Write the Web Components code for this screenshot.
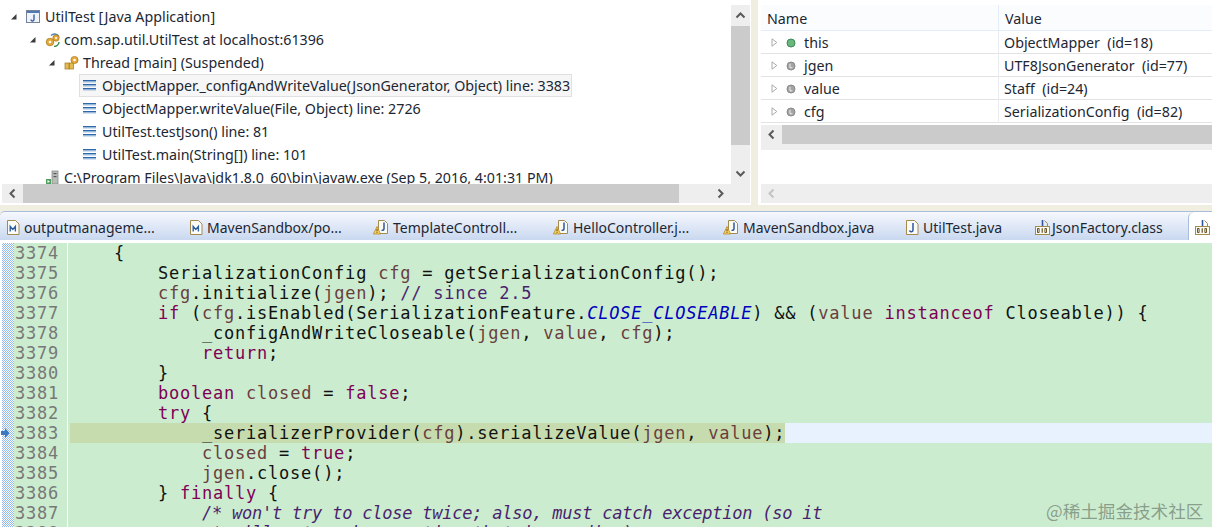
<!DOCTYPE html>
<html>
<head>
<meta charset="utf-8">
<title>UtilTest debug</title>
<style>
  html, body { margin: 0; height: 100%; overflow: hidden; }
  body { background: #f0ede1; font-family: "Noto Sans", sans-serif; }
  eclipse-window { display: block; }
</style>
</head>
<body>
<eclipse-window>
  <debug-view slot="left">
    <tree-row level="0" icon="app" twist="open">UtilTest [Java Application]</tree-row>
    <tree-row level="1" icon="vm" twist="open">com.sap.util.UtilTest at localhost:61396</tree-row>
    <tree-row level="2" icon="thread" twist="open">Thread [main] (Suspended)</tree-row>
    <tree-row level="3" icon="frame" selected>ObjectMapper._configAndWriteValue(JsonGenerator, Object) line: 3383</tree-row>
    <tree-row level="3" icon="frame">ObjectMapper.writeValue(File, Object) line: 2726</tree-row>
    <tree-row level="3" icon="frame">UtilTest.testJson() line: 81</tree-row>
    <tree-row level="3" icon="frame">UtilTest.main(String[]) line: 101</tree-row>
    <tree-row level="1" icon="proc">C:\Program Files\Java\jdk1.8.0_60\bin\javaw.exe (Sep 5, 2016, 4:01:31 PM)</tree-row>
  </debug-view>
  <variables-view slot="right">
    <var-row kind="this" name="this" value="ObjectMapper  (id=18)"></var-row>
    <var-row kind="local" name="jgen" value="UTF8JsonGenerator  (id=77)"></var-row>
    <var-row kind="local" name="value" value="Staff  (id=24)"></var-row>
    <var-row kind="local" name="cfg" value="SerializationConfig  (id=82)"></var-row>
  </variables-view>
  <editor-tabs slot="tabs">
    <editor-tab icon="maven" width="183">outputmanageme...</editor-tab>
    <editor-tab icon="maven" width="183">MavenSandbox/po...</editor-tab>
    <editor-tab icon="warn" width="180">TemplateControll...</editor-tab>
    <editor-tab icon="warn" width="170">HelloController.j...</editor-tab>
    <editor-tab icon="warn" width="183">MavenSandbox.java</editor-tab>
    <editor-tab icon="java" width="129">UtilTest.java</editor-tab>
    <editor-tab icon="cls" width="160">JsonFactory.class</editor-tab>
    <editor-tab icon="cls" active></editor-tab>
  </editor-tabs>
  <code-editor slot="editor">
    <code-line n="3374">    {</code-line>
    <code-line n="3375">        SerializationConfig <v-ar>cfg</v-ar> = getSerializationConfig();</code-line>
    <code-line n="3376">        <v-ar>cfg</v-ar>.initialize(<v-ar>jgen</v-ar>); <c-om>// since 2.5</c-om></code-line>
    <code-line n="3377">        <k-w>if</k-w> (<v-ar>cfg</v-ar>.isEnabled(SerializationFeature.<s-t>CLOSE_CLOSEABLE</s-t>) &amp;&amp; (<v-ar>value</v-ar> <k-w>instanceof</k-w> Closeable)) {</code-line>
    <code-line n="3378">            _configAndWriteCloseable(<v-ar>jgen</v-ar>, <v-ar>value</v-ar>, <v-ar>cfg</v-ar>);</code-line>
    <code-line n="3379">            <k-w>return</k-w>;</code-line>
    <code-line n="3380">        }</code-line>
    <code-line n="3381">        <k-w>boolean</k-w> <v-ar>closed</v-ar> = <k-w>false</k-w>;</code-line>
    <code-line n="3382">        <k-w>try</k-w> {</code-line>
    <code-line n="3383" current>            _serializerProvider(<v-ar>cfg</v-ar>).serializeValue(<v-ar>jgen</v-ar>, <v-ar>value</v-ar>);</code-line>
    <code-line n="3384">            <v-ar>closed</v-ar> = <k-w>true</k-w>;</code-line>
    <code-line n="3385">            <v-ar>jgen</v-ar>.close();</code-line>
    <code-line n="3386">        } <k-w>finally</k-w> {</code-line>
    <code-line n="3387">            <m-c>/* won't try to close twice; also, must catch exception (so it</m-c></code-line>
    <code-line n="3388">            <m-c> * will not mask exception that is pending)</m-c></code-line>
  </code-editor>
</eclipse-window>

<script>
  // icons: paths in a 15x15 box
  const ICONS = {
    app: `<rect x=".5" y="1.5" width="13" height="12" fill="#eef2fa" stroke="#76849b"/><rect x="1" y="2" width="12" height="2" fill="#4f78b4"/><path d="M8 5.5v5a1.5 1.5 0 0 1-3 0" fill="none" stroke="#2f55a0" stroke-width="1.3"/>`,
    vm: `<path d="M6 3.5a5 5 0 0 1 8 1" fill="none" stroke="#4d86b8" stroke-width="1.5"/><circle cx="11" cy="6" r="3.2" fill="#e4a83a" stroke="#a87818" stroke-width=".7"/><circle cx="11" cy="6" r="1.1" fill="#fff"/><circle cx="5" cy="10" r="3.8" fill="#e4a83a" stroke="#a87818" stroke-width=".7"/><circle cx="5" cy="10" r="1.3" fill="#fff"/><path d="M14 10a5 5 0 0 1-5 4.5" fill="none" stroke="#3f8c4f" stroke-width="1.5"/>`,
    thread: `<rect x="1" y="8" width="4" height="6" fill="#e4bb50" stroke="#a07820" stroke-width=".7"/><rect x="5.5" y="8" width="4" height="6" fill="#e4bb50" stroke="#a07820" stroke-width=".7"/><circle cx="10.5" cy="5" r="3.6" fill="#e8a838" stroke="#a87818" stroke-width=".7"/><circle cx="10.5" cy="5" r="1.3" fill="#fff"/>`,
    frame: `<rect x="0" y="2" width="13" height="1.4" fill="#2f68a8"/><rect x="0" y="3.4" width="13" height="1" fill="#8fb2d8"/><rect x="0" y="6" width="13" height="1.4" fill="#2f68a8"/><rect x="0" y="7.4" width="13" height="1" fill="#8fb2d8"/><rect x="0" y="10" width="13" height="1.4" fill="#2f68a8"/><rect x="0" y="11.4" width="13" height="1" fill="#8fb2d8"/>`,
    proc: `<rect x="7" y="1" width="6" height="13" fill="#b9bdb8" stroke="#7a7f7a" stroke-width=".7"/><rect x="8.5" y="3" width="3" height="1.2" fill="#556"/><rect x="8.5" y="6" width="3" height="1.2" fill="#556"/><rect x="1" y="9" width="5" height="5" fill="#4f9f5f"/><path d="M2.5 10v3l2.5-1.5z" fill="#fff"/>`,
    maven: `<path d="M.5.5h8l3.5 3.5v10.5H.5z" fill="#fbfbf6" stroke="#a58a50"/><rect x="2.5" y="5.5" width="7.5" height="7" fill="#fff"/><path d="M3.2 11.5v-5l2.6 3 2.6-3v5" fill="none" stroke="#2d5fa0" stroke-width="1.4"/>`,
    java: `<path d="M.5.5h8l3.5 3.5v10.5H.5z" fill="#fbfbf6" stroke="#a58a50"/><path d="M7 3v7a1.8 1.8 0 0 1-3.5.6" fill="none" stroke="#2f55a0" stroke-width="1.5"/>`,
    warn: `<path d="M5.5.5h6l3 3v10h-9z" fill="#fbfbf6" stroke="#a58a50"/><path d="M11 2.5v6.5a1.6 1.6 0 0 1-2.5 1" fill="none" stroke="#2f55a0" stroke-width="1.5"/><path d="M4 6.5l3.6 7.5H.4z" fill="#f5d060" stroke="#b08020" stroke-width=".7"/><path d="M4 9v2.4M4 12.2v.8" stroke="#604000" stroke-width=".9"/>`,
    cls: `<path d="M7.5 0v6a1.8 1.8 0 0 1-3.2.8" fill="none" stroke="#2f55a0" stroke-width="1.6"/><path d="M9.5 .5l3 3v3" fill="none" stroke="#a58a50"/><rect x=".5" y="6.5" width="14" height="8" fill="#fbfbf6" stroke="#a58a50"/><path d="M2.5 8.5h1.6v4H2.5zM9.9 8.5h1.6v4H9.9z" fill="none" stroke="#5a4210" stroke-width=".9"/><path d="M7.2 8.2v4.6" stroke="#5a4210" stroke-width="1.1"/>`
  }

  class EclipseWindow extends HTMLElement {
    constructor() {
      super()
      this.attachShadow({ mode: 'open' })
      this.shadowRoot.innerHTML = `
        <style>
          :host { display: block; width: 1212px; height: 527px; background: #f0ede1; overflow: hidden; position: relative; }
          .top { display: grid; grid-template-columns: 751px 1fr; column-gap: 7px; height: 205px; }
          .gap { height: 6px; }
        </style>
        <div class="top">
          <slot name="left"></slot>
          <slot name="right"></slot>
        </div>
        <div class="gap"></div>
        <slot name="tabs"></slot>
        <slot name="editor"></slot>
        <j-watermark></j-watermark>
      `
    }
  }

  class ScrollBar extends HTMLElement {
    constructor() {
      super()
      this.attachShadow({ mode: 'open' })
      this.shadowRoot.innerHTML = `
        <style>
          :host { display: flex; background: #eeeeee; flex: none; }
          :host([dir-v="v"]) { flex-direction: column; width: 19px; height: 179px; }
          :host(:not([dir-v="v"])) { height: 19px; }
          .btn { flex: none; display: flex; align-items: center; justify-content: center; width: 21px; height: 19px; }
          :host([dir-v="v"]) .btn { width: 19px; height: 21px; }
          .thumb { background: #cbcbcb; flex: none; }
          .rest { flex: 1; }
          svg { display: block; }
        </style>
        <div class="btn" id="a"></div><div class="thumb"></div><div class="rest"></div><div class="btn" id="b"></div>
      `
    }
    connectedCallback() {
      const v = this.getAttribute('dir-v') === 'v'
      const len = this.getAttribute('thumb') || 0
      const color = this.hasAttribute('disabled') ? '#c4c4c4' : '#5a5a5a'
      const thumb = this.shadowRoot.querySelector('.thumb')
      if (v) thumb.style.height = len + 'px'
      else thumb.style.width = len + 'px'
      const arrow = (d) => `<svg width="11" height="11" viewBox="0 0 11 11"><path d="${d}" fill="none" stroke="${color}" stroke-width="2"/></svg>`
      this.shadowRoot.querySelector('#a').innerHTML = arrow(v ? 'M1.5 7.5l4-4 4 4' : 'M7.5 1.5l-4 4 4 4')
      this.shadowRoot.querySelector('#b').innerHTML = this.hasAttribute('no-end') ? '' : arrow(v ? 'M1.5 3.5l4 4 4-4' : 'M3.5 1.5l4 4-4 4')
    }
  }

  class DebugView extends HTMLElement {
    constructor() {
      super()
      this.attachShadow({ mode: 'open' })
      this.shadowRoot.innerHTML = `
        <style>
          :host { display: grid; grid-template-columns: 1fr 19px; grid-template-rows: 179px 19px 2px; padding: 5px 1px 0 0; background: #fff; }
          .tree { overflow: hidden; background: #fff; }
          .h { margin-left: 2px; }
          .corner { background: #eee; }
        </style>
        <div class="tree"><slot></slot></div>
        <scroll-bar dir-v="v" thumb="119"></scroll-bar>
        <scroll-bar class="h" thumb="656"></scroll-bar>
        <div class="corner"></div>
      `
    }
  }

  class TreeRow extends HTMLElement {
    constructor() {
      super()
      this.attachShadow({ mode: 'open' })
      this.shadowRoot.innerHTML = `
        <style>
          :host { display: flex; align-items: center; height: 23px; font-size: 14.26px; color: #1c2733; white-space: nowrap; }
          .tw { width: 12px; flex: none; }
          .tw svg { display: block; }
          .ic { width: 15px; height: 15px; flex: none; margin-right: 4px; }
          .sel { display: flex; align-items: center; height: 23px; box-sizing: border-box; padding: 0 2px 0 4px; }
          :host([selected]) .sel { background: #f6f6f6; outline: 1px solid #e0e0e0; outline-offset: -1px; }
        </style>
        <div class="tw"></div>
        <div class="sel"><svg class="ic" viewBox="0 0 15 15"></svg><span><slot></slot></span></div>
      `
    }
    connectedCallback() {
      this.style.paddingLeft = [10, 29, 48, 67][+this.getAttribute('level')] + 'px'
      this.shadowRoot.querySelector('.ic').innerHTML = ICONS[this.getAttribute('icon')]
      if (this.getAttribute('twist') === 'open') {
        this.shadowRoot.querySelector('.tw').innerHTML = '<svg width="7" height="7" viewBox="0 0 7 7"><path d="M6.5 1v5.5H1z" fill="#3c3c3c"/></svg>'
      }
    }
  }

  class VariablesView extends HTMLElement {
    constructor() {
      super()
      this.attachShadow({ mode: 'open' })
      this.shadowRoot.innerHTML = `
        <style>
          :host { display: block; padding: 5px 0 0 3px; background: #fff; height: 200px; font-size: 14.26px; color: #1c2733; }
          .head { display: grid; grid-template-columns: 237px 1fr; height: 25px; background: #fbfcfe; border-bottom: 1px solid #e3edfb; }
          .head div { padding-left: 6px; line-height: 27px; }
          .head div + div { border-left: 1px solid #e3edfb; }
          .rows { height: 94px; overflow: hidden; }
          .pane-h { height: 25px; background: #eee; }
          .space { height: 34px; }
        </style>
        <div class="head"><div>Name</div><div>Value</div></div>
        <div class="rows"><slot></slot></div>
        <div class="pane-h"><scroll-bar thumb="430" no-end></scroll-bar></div>
        <div class="space"></div>
        <scroll-bar disabled no-end></scroll-bar>
      `
    }
  }

  class VarRow extends HTMLElement {
    constructor() {
      super()
      this.attachShadow({ mode: 'open' })
      this.shadowRoot.innerHTML = `
        <style>
          :host { display: grid; grid-template-columns: 237px 1fr; height: 22px; border-bottom: 1px solid #e3e3e3; line-height: 23px; white-space: pre; }
          .n { display: flex; align-items: center; padding-left: 10px; }
          .v { border-left: 1px solid #e9edf2; padding-left: 5px; }
          .tw { margin-right: 8px; display: block; }
          .dot { margin-right: 8px; display: block; }
        </style>
        <div class="n">
          <svg class="tw" width="7" height="9" viewBox="0 0 7 9"><path d="M1 .8v7.4L5.8 4.5z" fill="#fff" stroke="#a9a9a9"/></svg>
          <svg class="dot" width="10" height="10" viewBox="0 0 10 10"></svg>
          <span id="n"></span>
        </div>
        <div class="v" id="v"></div>
      `
    }
    connectedCallback() {
      this.shadowRoot.querySelector('#n').textContent = this.getAttribute('name')
      this.shadowRoot.querySelector('#v').textContent = this.getAttribute('value')
      this.shadowRoot.querySelector('.dot').innerHTML = this.getAttribute('kind') === 'this'
        ? '<circle cx="5" cy="5" r="4" fill="#6bb67d" stroke="#3a8a55"/>'
        : '<circle cx="5" cy="5" r="4" fill="#a3a3a3" stroke="#8a8a8a"/><path d="M4 2.8v4h2.4" fill="none" stroke="#eee" stroke-width="1"/>'
    }
  }

  class EditorTabs extends HTMLElement {
    constructor() {
      super()
      this.attachShadow({ mode: 'open' })
      this.shadowRoot.innerHTML = `
        <style>
          :host { display: flex; height: 32px; box-sizing: border-box; border-top: 1px solid #a9bcd9; background: linear-gradient(#f6f8fd, #c9d8f0) 0 0 / 100% 28px no-repeat, #fff; border-bottom: 3px solid #fff; overflow: hidden; border-top-left-radius: 5px; }
        </style>
        <slot></slot>
      `
    }
  }

  class EditorTab extends HTMLElement {
    constructor() {
      super()
      this.attachShadow({ mode: 'open' })
      this.shadowRoot.innerHTML = `
        <style>
          :host { display: flex; flex: none; align-items: center; padding: 2px 0 0 7px; box-sizing: border-box; font-size: 14px; color: #1c2733; white-space: nowrap; }
          :host([active]) { flex: 1; background: #fff; border-left: 1px solid #a9bcd9; border-radius: 6px 0 0 0; padding-left: 6px; }
          svg { flex: none; display: block; }
        </style>
        <svg height="15" viewBox="0 0 15 15"></svg><slot></slot>
      `
    }
    connectedCallback() {
      const icon = this.getAttribute('icon')
      const svg = this.shadowRoot.querySelector('svg')
      const narrow = icon === 'maven' || icon === 'java'
      svg.innerHTML = ICONS[icon]
      svg.setAttribute('viewBox', narrow ? '0 0 13 15' : '0 0 15 15')
      svg.setAttribute('width', narrow ? 13 : 15)
      svg.style.marginRight = (icon === 'cls' ? 2 : narrow ? 4 : 5) + 'px'
      if (this.hasAttribute('width')) this.style.width = this.getAttribute('width') + 'px'
    }
  }

  class CodeEditor extends HTMLElement {
    constructor() {
      super()
      this.attachShadow({ mode: 'open' })
      this.shadowRoot.innerHTML = `
        <style>
          :host { display: block; height: 284px; overflow: hidden; background: #cbeccf; font-family: "DejaVu Sans Mono", monospace; font-size: 17px; letter-spacing: 0.77px; color: #111; }
        </style>
        <slot></slot>
      `
    }
  }

  class CodeLine extends HTMLElement {
    constructor() {
      super()
      this.attachShadow({ mode: 'open' })
      this.shadowRoot.innerHTML = `
        <style>
          :host { display: grid; grid-template-columns: 2px 12px 53px 3px 1fr; height: 20px; line-height: 20px; white-space: pre; }
          .edge { background: #fff; }
          .ruler { background-color: #fff; background-image: conic-gradient(#8fb8ec 25%, #fff 0 50%, #8fb8ec 0 75%, #fff 0); background-size: 2px 2px; display: flex; align-items: center; }
          .num { color: #787878; padding-left: 1px; }
          .sep { border-left: 1px solid #fff; }
          :host([current]) .code { background: linear-gradient(90deg, #c6dcae 715px, #e8f2fe 715px); }
          svg { display: block; margin-left: -1px; }
        </style>
        <div class="edge"></div><div class="ruler"></div><div class="num"></div><div class="sep"></div><div class="code"><slot></slot></div>
      `
    }
    connectedCallback() {
      this.shadowRoot.querySelector('.num').textContent = this.getAttribute('n')
      if (this.hasAttribute('current')) {
        this.shadowRoot.querySelector('.ruler').innerHTML = '<svg width="9" height="10" viewBox="0 0 9 10"><path d="M0 3h4V0l4.5 5L4 10V7H0z" fill="#3a78c0"/></svg>'
      }
    }
  }

  // small inline token elements, only colour and style differ
  function token(name, css) {
    customElements.define(name, class extends HTMLElement {
      constructor() {
        super()
        this.attachShadow({ mode: 'open' })
        this.shadowRoot.innerHTML = `<style>:host { ${css} }</style><slot></slot>`
      }
    })
  }
  token('v-ar', 'color: #6a3e3e;')
  token('k-w', 'color: #7f0055;')
  token('s-t', 'color: #0000c0; font-style: italic;')
  token('c-om', 'color: #4a1f6e;')
  token('m-c', 'color: #4a1f6e; font-style: italic; letter-spacing: -0.23px;')

  class JWatermark extends HTMLElement {
    constructor() {
      super()
      this.attachShadow({ mode: 'open' })
      this.shadowRoot.innerHTML = `
        <style>
          :host { position: absolute; left: 1046px; top: 499px; font: 17.6px/24px "Noto Sans CJK SC", sans-serif; color: rgba(80, 90, 80, .55); white-space: nowrap; }
        </style>
        @稀土掘金技术社区
      `
    }
  }

  customElements.define('eclipse-window', EclipseWindow)
  customElements.define('scroll-bar', ScrollBar)
  customElements.define('debug-view', DebugView)
  customElements.define('tree-row', TreeRow)
  customElements.define('variables-view', VariablesView)
  customElements.define('var-row', VarRow)
  customElements.define('editor-tabs', EditorTabs)
  customElements.define('editor-tab', EditorTab)
  customElements.define('code-editor', CodeEditor)
  customElements.define('code-line', CodeLine)
  customElements.define('j-watermark', JWatermark)
</script>
</body>
</html>
